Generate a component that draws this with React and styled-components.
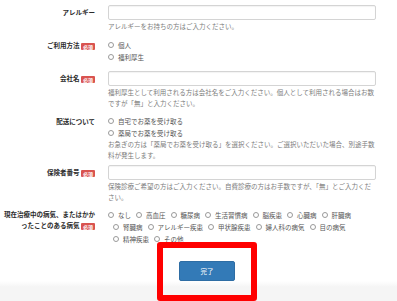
import React from "react";
import styled, { createGlobalStyle } from "styled-components";

const GlobalStyle = createGlobalStyle`
  html, body {
    margin: 0;
    padding: 0;
    background: #ffffff;
    overflow: hidden;
  }
  body {
    font-family: "Noto Sans CJK JP", "Noto Sans", sans-serif;
    color: #333333;
    font-size: 6.5px;
  }
`;

const Page = styled.div`
  width: 397px;
  padding-top: 5px;
`;

const Row = styled.div`
  display: grid;
  grid-template-columns: 95px 268px;
  column-gap: 13px;
  margin-top: ${(p) => p.$mt || 0}px;
`;

const Label = styled.div`
  font-weight: 700;
  text-align: right;
  color: #2b2b2b;
  line-height: ${(p) => p.$lh || 15}px;
  line-break: loose;
`;

const Badge = styled.span`
  display: inline-block;
  vertical-align: middle;
  margin-left: 1.5px;
  padding: 0 2px;
  height: 7px;
  line-height: 7px;
  font-size: 5px;
  font-weight: 700;
  color: #ffffff;
  background: #d9534f;
  border-radius: 1px;
`;

const Control = styled.div`
  display: flex;
  flex-direction: column;
`;

const Input = styled.div`
  box-sizing: border-box;
  height: 15px;
  width: 100%;
  background: #ffffff;
  border: 1px solid #d4d4d4;
  border-radius: 2px;
  box-shadow: inset 0 1px 1px rgba(0, 0, 0, 0.05);
`;

const Help = styled.div`
  margin-top: ${(p) => p.$mt ?? 1}px;
  line-height: 11px;
  color: #7c7c7c;
  line-break: loose;
`;

const RadioList = styled.div`
  display: flex;
  flex-direction: ${(p) => (p.$inline ? "row" : "column")};
  flex-wrap: wrap;
`;

const RadioItem = styled.label`
  display: inline-flex;
  align-items: center;
  line-height: 12px;
  color: #555555;
  margin-left: ${(p) => (p.$inline ? 5 : 0)}px;
  &:first-child {
    margin-left: 0;
  }
`;

const Circle = styled.span`
  box-sizing: border-box;
  width: 6px;
  height: 6px;
  margin-right: 4px;
  border: 0.8px solid #9a9a9a;
  border-radius: 50%;
  background: #ffffff;
  flex: none;
`;

const Actions = styled.div`
  position: relative;
  margin-top: 16px;
  margin-left: 179px;
  width: 56px;
  height: 20px;
`;

const Button = styled.button`
  box-sizing: border-box;
  width: 56px;
  height: 20px;
  padding: 0;
  background: #337ab7;
  border: 1px solid #2e6da4;
  border-radius: 2px;
  color: #ffffff;
  font-family: "Noto Sans CJK JP", "Noto Sans", sans-serif;
  font-size: 6.5px;
  line-height: 18px;
`;

const Highlight = styled.div`
  position: absolute;
  top: -19px;
  left: -22px;
  right: -22px;
  bottom: -20px;
  border: 6.5px solid #ff0000;
  border-radius: 3px;
  pointer-events: none;
  z-index: 2;
`;

const Footer = styled.div`
  height: 21px;
  background: linear-gradient(#ffffff, #f5f5f5 6px, #f5f5f5);
`;

const Radio = ({ children, inline }) => (
  <RadioItem $inline={inline}>
    <Circle />
    {children}
  </RadioItem>
);

const diseases = [
  "なし",
  "高血圧",
  "糖尿病",
  "生活習慣病",
  "脳疾患",
  "心臓病",
  "肝臓病",
  "腎臓病",
  "アレルギー疾患",
  "甲状腺疾患",
  "婦人科の病気",
  "目の病気",
  "精神疾患",
  "その他",
];

export default function App() {
  return (
    <>
      <GlobalStyle />
      <Page>
        <Row>
          <Label>アレルギー</Label>
          <Control>
            <Input />
            <Help>アレルギーをお持ちの方はご入力ください。</Help>
          </Control>
        </Row>

        <Row $mt={7}>
          <Label $lh={12}>
            ご利用方法<Badge>必須</Badge>
          </Label>
          <RadioList>
            <Radio>個人</Radio>
            <Radio>福利厚生</Radio>
          </RadioList>
        </Row>

        <Row $mt={8}>
          <Label>
            会社名<Badge>必須</Badge>
          </Label>
          <Control>
            <Input />
            <Help>
              福利厚生として利用される方は会社名をご入力ください。個人として利用される場合はお数ですが「無」と入力ください。
            </Help>
          </Control>
        </Row>

        <Row $mt={5.5}>
          <Label $lh={12}>配送について</Label>
          <Control>
            <RadioList>
              <Radio>自宅でお薬を受け取る</Radio>
              <Radio>薬局でお薬を受け取る</Radio>
            </RadioList>
            <Help $mt={0}>
              お急ぎの方は「薬局でお薬を受け取る」を選択ください。ご選択いただいた場合、別途手数料が発生します。
            </Help>
          </Control>
        </Row>

        <Row $mt={4.5}>
          <Label>
            保険者番号<Badge>必須</Badge>
          </Label>
          <Control>
            <Input />
            <Help>
              保険診療ご希望の方はご入力ください。自費診療の方はお手数ですが、「無」とご入力ください。
            </Help>
          </Control>
        </Row>

        <Row $mt={6}>
          <Label $lh={11}>
            現在治療中の病気、またはかかったことのある病気<Badge>必須</Badge>
          </Label>
          <RadioList $inline>
            {diseases.map((d) => (
              <Radio key={d} inline>
                {d}
              </Radio>
            ))}
          </RadioList>
        </Row>

        <Actions>
          <Button type="button">完了</Button>
          <Highlight />
        </Actions>

        <Footer />
      </Page>
    </>
  );
}
